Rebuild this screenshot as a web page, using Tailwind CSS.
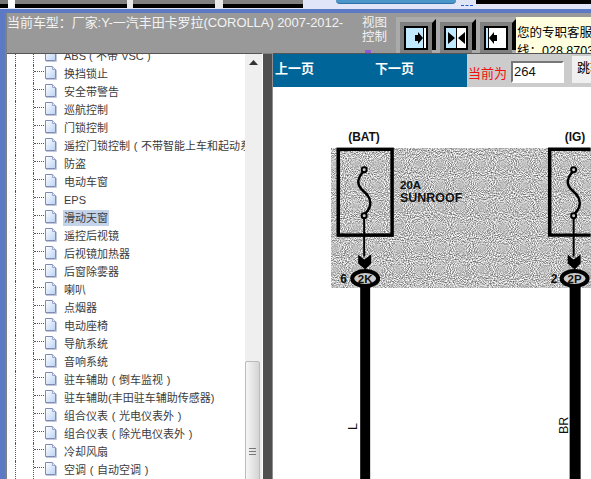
<!DOCTYPE html>
<html lang="zh-CN">
<head>
    <meta charset="UTF-8">
    <title>当前车型</title>
    <script src="https://cdn.jsdelivr.net/npm/@tailwindcss/browser@4"></script>
</head>
<body class="bg-white">
<!-- shared icons -->
<svg width="0" height="0" class="absolute">
    <defs>
        <linearGradient id="paper" x1="0" y1="0" x2="1" y2="1">
            <stop offset="0" stop-color="#ffffff"/>
            <stop offset="1" stop-color="#b9d3f5"/>
        </linearGradient>
        <symbol id="doc" viewBox="0 0 13 14">
            <path d="M1.5 .5H8.5L11.5 3.5V12.5H1.5Z" fill="url(#paper)" stroke="#7f8cb8"/>
            <path d="M8.5 .5V3.5H11.5" fill="#dfe8f8" stroke="#9aa6cc"/>
            <path d="M2 13.5H12.5V4" fill="none" stroke="#c4c8d4"/>
        </symbol>
        <filter id="speckle" x="0" y="0" width="100%" height="100%" color-interpolation-filters="sRGB">
            <feTurbulence type="fractalNoise" baseFrequency="0.95" numOctaves="1" seed="7"/>
            <feColorMatrix values="1 0 0 0 0 1 0 0 0 0 1 0 0 0 0 0 0 0 0 1"/>
            <feComponentTransfer>
                <feFuncR type="linear" slope="1.3" intercept="0.1"/>
                <feFuncG type="linear" slope="1.3" intercept="0.1"/>
                <feFuncB type="linear" slope="1.3" intercept="0.1"/>
            </feComponentTransfer>
        </filter>
    </defs>
</svg>

<div class="w-[591px] h-[479px] overflow-hidden flex flex-col font-['Liberation_Sans','Noto_Sans_CJK_SC',sans-serif]">

    <!-- top strip -->
    <div class="h-[9px] flex shrink-0 bg-[#e0e6f8]">
        <div class="w-[8px] h-[8px] bg-[#777] border-b-[4px] border-black"></div>
        <div class="w-[7px] h-[8px] bg-white"></div>
        <div class="w-[112px] h-[8px] bg-[#808080] border-b-[4px] border-black"></div>
        <div class="w-[6px] h-[8px] bg-[#e8e8e8]"></div>
        <div class="w-[82px] h-[8px] bg-[#808080] border-b-[4px] border-black"></div>
        <div class="w-[8px] h-[8px] bg-[#e8e8e8]"></div>
        <div class="w-[80px] h-[8px] bg-[#808080] border-b-[4px] border-black"></div>
        <div class="w-[33px]"></div>
        <div class="w-[120px] h-[4px] bg-[#4b96c8] border-b border-[#2f6fa8] rounded-b-[4px]"></div>
        <div class="w-[20px] pl-[5px] pt-[5px]"><div class="w-[12px] h-[2px] border-t border-dashed border-[#1c5fd0] border-b-0"></div></div>
        <div class="flex-1 h-[4px] bg-black"></div>
    </div>
    <div class="h-[4px] shrink-0 bg-[#5c7ac4]"></div>

    <!-- header -->
    <div class="h-[40px] shrink-0 flex bg-[#999] border-l-[5px] border-l-[#5c7ac4]">
        <div class="w-[2px] bg-[#808080]"></div>
        <div class="w-[355px] pt-[1px] text-[13px] leading-[18px] tracking-[-0.06px] text-[#f2f2f2] whitespace-nowrap">当前车型：厂家:Y-一汽丰田卡罗拉(COROLLA) 2007-2012-</div>
        <div class="w-[34px] pt-[3px] text-[12.5px] leading-[14px] text-[#f2f2f2] relative">
            <div>视图</div>
            <div>控制</div>
            <div class="absolute left-[3px] bottom-0 w-[6px] h-[3px] bg-[#8a3cf0]/70"></div>
        </div>
        <!-- view buttons -->
        <div class="mt-[4px] w-[120px] flex">
            <div class="w-[44px] pl-[4px] pt-[5px] bg-[#aaa] flex">
                <div class="w-[32px] h-full bg-[#808080] pl-[4px] pt-[4px]">
                    <div class="w-[24px] h-[24px] border-2 border-black bg-[#bfeaff]">
                        <svg width="20" height="20" viewBox="0 0 20 20"><rect x="18" width="2" height="20" fill="#fff"/><rect x="17" width="1" height="20" fill="#000"/><path d="M9 7H12V4L17 10L12 16V13H9Z" fill="#000"/></svg>
                    </div>
                </div>
                <svg class="w-[4px] h-full mt-[-3px]" viewBox="0 0 4 32" preserveAspectRatio="none"><path d="M0 4L4 0V32H0Z" fill="#000"/></svg>
            </div>
            <div class="w-[36px] pt-[5px] bg-[#aaa] flex">
                <div class="w-[32px] h-full bg-[#808080] pl-[4px] pt-[4px]">
                    <div class="w-[24px] h-[24px] border-2 border-black bg-white">
                        <svg width="20" height="20" viewBox="0 0 20 20"><rect width="10" height="20" fill="#bfeaff"/><rect x="10" width="1" height="20" fill="#000"/><path d="M2 4V16L9 10Z M19 4V16L12 10Z" fill="#000"/></svg>
                    </div>
                </div>
                <svg class="w-[4px] h-full mt-[-3px]" viewBox="0 0 4 32" preserveAspectRatio="none"><path d="M0 4L4 0V32H0Z" fill="#000"/></svg>
            </div>
            <div class="w-[40px] pl-[4px] pt-[5px] bg-[#aaa] flex">
                <div class="w-[32px] h-full bg-[#808080] pl-[4px] pt-[4px]">
                    <div class="w-[24px] h-[24px] border-2 border-black bg-white">
                        <svg width="20" height="20" viewBox="0 0 20 20"><rect width="2" height="20" fill="#bfeaff"/><rect x="2" width="1" height="20" fill="#000"/><path d="M3 10L8 4V7H11V13H8V16Z" fill="#000"/></svg>
                    </div>
                </div>
                <svg class="w-[4px] h-full mt-[-3px]" viewBox="0 0 4 32" preserveAspectRatio="none"><path d="M0 4L4 0V32H0Z" fill="#000"/></svg>
            </div>
        </div>
        <!-- service notice -->
        <div class="mt-[4px] flex-1 bg-[#ffffe0] pl-[1px] pt-[7px] text-[12.5px] leading-[18px] text-black whitespace-nowrap overflow-hidden">
            <div>您的专职客服</div>
            <div>线：028 8703</div>
        </div>
    </div>

    <!-- main -->
    <div class="flex-1 flex min-h-0 border-l-[5px] border-l-[#5c7ac4]">
        <div class="w-[2px] bg-[#808080]"></div>

        <!-- tree -->
        <div class="w-[238px] border-t border-[#555] overflow-hidden bg-white">
            <div class="-mt-[7px] text-[11px] text-[#3c3c3c] whitespace-nowrap">
                <div class="h-[18px] flex items-center"><div class="ml-[8px] w-[18px] h-full shrink-0 border-l border-dotted border-[#555]"></div><div class="w-[11px] h-full shrink-0 border-l border-dotted border-[#555] pt-[6px]"><div class="border-t border-dotted border-[#555]"></div></div><svg class="w-[13px] h-[14px] shrink-0 -mt-[3px]"><use href="#doc"/></svg><span class="ml-[6px] px-[1px] shrink-0">ABS <span class="inline-block w-[7px]">(</span>不带 VSC<span class="inline-block w-[7px] text-right">)</span></span></div>
                <div class="h-[18px] flex items-center"><div class="ml-[8px] w-[18px] h-full shrink-0 border-l border-dotted border-[#555]"></div><div class="w-[11px] h-full shrink-0 border-l border-dotted border-[#555] pt-[6px]"><div class="border-t border-dotted border-[#555]"></div></div><svg class="w-[13px] h-[14px] shrink-0 -mt-[3px]"><use href="#doc"/></svg><span class="ml-[6px] px-[1px] shrink-0">换挡锁止</span></div>
                <div class="h-[18px] flex items-center"><div class="ml-[8px] w-[18px] h-full shrink-0 border-l border-dotted border-[#555]"></div><div class="w-[11px] h-full shrink-0 border-l border-dotted border-[#555] pt-[6px]"><div class="border-t border-dotted border-[#555]"></div></div><svg class="w-[13px] h-[14px] shrink-0 -mt-[3px]"><use href="#doc"/></svg><span class="ml-[6px] px-[1px] shrink-0">安全带警告</span></div>
                <div class="h-[18px] flex items-center"><div class="ml-[8px] w-[18px] h-full shrink-0 border-l border-dotted border-[#555]"></div><div class="w-[11px] h-full shrink-0 border-l border-dotted border-[#555] pt-[6px]"><div class="border-t border-dotted border-[#555]"></div></div><svg class="w-[13px] h-[14px] shrink-0 -mt-[3px]"><use href="#doc"/></svg><span class="ml-[6px] px-[1px] shrink-0">巡航控制</span></div>
                <div class="h-[18px] flex items-center"><div class="ml-[8px] w-[18px] h-full shrink-0 border-l border-dotted border-[#555]"></div><div class="w-[11px] h-full shrink-0 border-l border-dotted border-[#555] pt-[6px]"><div class="border-t border-dotted border-[#555]"></div></div><svg class="w-[13px] h-[14px] shrink-0 -mt-[3px]"><use href="#doc"/></svg><span class="ml-[6px] px-[1px] shrink-0">门锁控制</span></div>
                <div class="h-[18px] flex items-center"><div class="ml-[8px] w-[18px] h-full shrink-0 border-l border-dotted border-[#555]"></div><div class="w-[11px] h-full shrink-0 border-l border-dotted border-[#555] pt-[6px]"><div class="border-t border-dotted border-[#555]"></div></div><svg class="w-[13px] h-[14px] shrink-0 -mt-[3px]"><use href="#doc"/></svg><span class="ml-[6px] px-[1px] shrink-0">遥控门锁控制<span class="inline-block w-[11px] text-center">(</span>不带智能上车和起动系统<span class="inline-block w-[11px] text-center">)</span></span></div>
                <div class="h-[18px] flex items-center"><div class="ml-[8px] w-[18px] h-full shrink-0 border-l border-dotted border-[#555]"></div><div class="w-[11px] h-full shrink-0 border-l border-dotted border-[#555] pt-[6px]"><div class="border-t border-dotted border-[#555]"></div></div><svg class="w-[13px] h-[14px] shrink-0 -mt-[3px]"><use href="#doc"/></svg><span class="ml-[6px] px-[1px] shrink-0">防盗</span></div>
                <div class="h-[18px] flex items-center"><div class="ml-[8px] w-[18px] h-full shrink-0 border-l border-dotted border-[#555]"></div><div class="w-[11px] h-full shrink-0 border-l border-dotted border-[#555] pt-[6px]"><div class="border-t border-dotted border-[#555]"></div></div><svg class="w-[13px] h-[14px] shrink-0 -mt-[3px]"><use href="#doc"/></svg><span class="ml-[6px] px-[1px] shrink-0">电动车窗</span></div>
                <div class="h-[18px] flex items-center"><div class="ml-[8px] w-[18px] h-full shrink-0 border-l border-dotted border-[#555]"></div><div class="w-[11px] h-full shrink-0 border-l border-dotted border-[#555] pt-[6px]"><div class="border-t border-dotted border-[#555]"></div></div><svg class="w-[13px] h-[14px] shrink-0 -mt-[3px]"><use href="#doc"/></svg><span class="ml-[6px] px-[1px] shrink-0">EPS</span></div>
                <div class="h-[18px] flex items-center"><div class="ml-[8px] w-[18px] h-full shrink-0 border-l border-dotted border-[#555]"></div><div class="w-[11px] h-full shrink-0 border-l border-dotted border-[#555] pt-[6px]"><div class="border-t border-dotted border-[#555]"></div></div><svg class="w-[13px] h-[14px] shrink-0 -mt-[3px]"><use href="#doc"/></svg><span class="ml-[6px] px-[1px] shrink-0 bg-[#c2d3ea]">滑动天窗</span></div>
                <div class="h-[18px] flex items-center"><div class="ml-[8px] w-[18px] h-full shrink-0 border-l border-dotted border-[#555]"></div><div class="w-[11px] h-full shrink-0 border-l border-dotted border-[#555] pt-[6px]"><div class="border-t border-dotted border-[#555]"></div></div><svg class="w-[13px] h-[14px] shrink-0 -mt-[3px]"><use href="#doc"/></svg><span class="ml-[6px] px-[1px] shrink-0">遥控后视镜</span></div>
                <div class="h-[18px] flex items-center"><div class="ml-[8px] w-[18px] h-full shrink-0 border-l border-dotted border-[#555]"></div><div class="w-[11px] h-full shrink-0 border-l border-dotted border-[#555] pt-[6px]"><div class="border-t border-dotted border-[#555]"></div></div><svg class="w-[13px] h-[14px] shrink-0 -mt-[3px]"><use href="#doc"/></svg><span class="ml-[6px] px-[1px] shrink-0">后视镜加热器</span></div>
                <div class="h-[18px] flex items-center"><div class="ml-[8px] w-[18px] h-full shrink-0 border-l border-dotted border-[#555]"></div><div class="w-[11px] h-full shrink-0 border-l border-dotted border-[#555] pt-[6px]"><div class="border-t border-dotted border-[#555]"></div></div><svg class="w-[13px] h-[14px] shrink-0 -mt-[3px]"><use href="#doc"/></svg><span class="ml-[6px] px-[1px] shrink-0">后窗除雾器</span></div>
                <div class="h-[18px] flex items-center"><div class="ml-[8px] w-[18px] h-full shrink-0 border-l border-dotted border-[#555]"></div><div class="w-[11px] h-full shrink-0 border-l border-dotted border-[#555] pt-[6px]"><div class="border-t border-dotted border-[#555]"></div></div><svg class="w-[13px] h-[14px] shrink-0 -mt-[3px]"><use href="#doc"/></svg><span class="ml-[6px] px-[1px] shrink-0">喇叭</span></div>
                <div class="h-[18px] flex items-center"><div class="ml-[8px] w-[18px] h-full shrink-0 border-l border-dotted border-[#555]"></div><div class="w-[11px] h-full shrink-0 border-l border-dotted border-[#555] pt-[6px]"><div class="border-t border-dotted border-[#555]"></div></div><svg class="w-[13px] h-[14px] shrink-0 -mt-[3px]"><use href="#doc"/></svg><span class="ml-[6px] px-[1px] shrink-0">点烟器</span></div>
                <div class="h-[18px] flex items-center"><div class="ml-[8px] w-[18px] h-full shrink-0 border-l border-dotted border-[#555]"></div><div class="w-[11px] h-full shrink-0 border-l border-dotted border-[#555] pt-[6px]"><div class="border-t border-dotted border-[#555]"></div></div><svg class="w-[13px] h-[14px] shrink-0 -mt-[3px]"><use href="#doc"/></svg><span class="ml-[6px] px-[1px] shrink-0">电动座椅</span></div>
                <div class="h-[18px] flex items-center"><div class="ml-[8px] w-[18px] h-full shrink-0 border-l border-dotted border-[#555]"></div><div class="w-[11px] h-full shrink-0 border-l border-dotted border-[#555] pt-[6px]"><div class="border-t border-dotted border-[#555]"></div></div><svg class="w-[13px] h-[14px] shrink-0 -mt-[3px]"><use href="#doc"/></svg><span class="ml-[6px] px-[1px] shrink-0">导航系统</span></div>
                <div class="h-[18px] flex items-center"><div class="ml-[8px] w-[18px] h-full shrink-0 border-l border-dotted border-[#555]"></div><div class="w-[11px] h-full shrink-0 border-l border-dotted border-[#555] pt-[6px]"><div class="border-t border-dotted border-[#555]"></div></div><svg class="w-[13px] h-[14px] shrink-0 -mt-[3px]"><use href="#doc"/></svg><span class="ml-[6px] px-[1px] shrink-0">音响系统</span></div>
                <div class="h-[18px] flex items-center"><div class="ml-[8px] w-[18px] h-full shrink-0 border-l border-dotted border-[#555]"></div><div class="w-[11px] h-full shrink-0 border-l border-dotted border-[#555] pt-[6px]"><div class="border-t border-dotted border-[#555]"></div></div><svg class="w-[13px] h-[14px] shrink-0 -mt-[3px]"><use href="#doc"/></svg><span class="ml-[6px] px-[1px] shrink-0">驻车辅助<span class="inline-block w-[11px] text-center">(</span>倒车监视<span class="inline-block w-[11px] text-center">)</span></span></div>
                <div class="h-[18px] flex items-center"><div class="ml-[8px] w-[18px] h-full shrink-0 border-l border-dotted border-[#555]"></div><div class="w-[11px] h-full shrink-0 border-l border-dotted border-[#555] pt-[6px]"><div class="border-t border-dotted border-[#555]"></div></div><svg class="w-[13px] h-[14px] shrink-0 -mt-[3px]"><use href="#doc"/></svg><span class="ml-[6px] px-[1px] shrink-0">驻车辅助(丰田驻车辅助传感器)</span></div>
                <div class="h-[18px] flex items-center"><div class="ml-[8px] w-[18px] h-full shrink-0 border-l border-dotted border-[#555]"></div><div class="w-[11px] h-full shrink-0 border-l border-dotted border-[#555] pt-[6px]"><div class="border-t border-dotted border-[#555]"></div></div><svg class="w-[13px] h-[14px] shrink-0 -mt-[3px]"><use href="#doc"/></svg><span class="ml-[6px] px-[1px] shrink-0">组合仪表<span class="inline-block w-[11px] text-center">(</span>光电仪表外<span class="inline-block w-[11px] text-center">)</span></span></div>
                <div class="h-[18px] flex items-center"><div class="ml-[8px] w-[18px] h-full shrink-0 border-l border-dotted border-[#555]"></div><div class="w-[11px] h-full shrink-0 border-l border-dotted border-[#555] pt-[6px]"><div class="border-t border-dotted border-[#555]"></div></div><svg class="w-[13px] h-[14px] shrink-0 -mt-[3px]"><use href="#doc"/></svg><span class="ml-[6px] px-[1px] shrink-0">组合仪表<span class="inline-block w-[11px] text-center">(</span>除光电仪表外<span class="inline-block w-[11px] text-center">)</span></span></div>
                <div class="h-[18px] flex items-center"><div class="ml-[8px] w-[18px] h-full shrink-0 border-l border-dotted border-[#555]"></div><div class="w-[11px] h-full shrink-0 border-l border-dotted border-[#555] pt-[6px]"><div class="border-t border-dotted border-[#555]"></div></div><svg class="w-[13px] h-[14px] shrink-0 -mt-[3px]"><use href="#doc"/></svg><span class="ml-[6px] px-[1px] shrink-0">冷却风扇</span></div>
                <div class="h-[18px] flex items-center"><div class="ml-[8px] w-[18px] h-full shrink-0 border-l border-dotted border-[#555]"></div><div class="w-[11px] h-full shrink-0 border-l border-dotted border-[#555] pt-[6px]"><div class="border-t border-dotted border-[#555]"></div></div><svg class="w-[13px] h-[14px] shrink-0 -mt-[3px]"><use href="#doc"/></svg><span class="ml-[6px] px-[1px] shrink-0">空调<span class="inline-block w-[11px] text-center">(</span>自动空调<span class="inline-block w-[11px] text-center">)</span></span></div>
            </div>
        </div>

        <!-- scrollbar -->
        <div class="w-[18px] bg-[#efefef] border-t border-[#555] border-r border-r-white pt-[6px] relative">
            <svg class="ml-[4px]" width="9" height="5" viewBox="0 0 9 5"><path d="M4.5 0L9 5H0Z" fill="#333"/></svg>
            <div class="absolute left-0 top-[307px] w-[15px] h-[130px] rounded-t-[2px] border border-[#bbb] bg-[linear-gradient(90deg,#f6f6f6,#d4d4d4)] flex justify-center pt-[86px]">
                <div class="w-[7px] h-[7px] border-y border-[#777]"><div class="mt-[2px] border-t border-[#777]"></div></div>
            </div>
        </div>

        <!-- splitter -->
        <div class="w-[9px] bg-[#505050] border-t border-[#808080]"></div>
        <div class="w-[1px] bg-[#909090]"></div>

        <!-- page viewer -->
        <div class="flex-1 min-w-0 flex flex-col bg-white border-t border-[#555]">
            <div class="h-[33px] shrink-0 flex bg-[#006699]">
                <div class="w-[194px] shrink-0 flex pl-[2px] pt-[6px] text-[13px] leading-[18px] text-white font-bold">
                    <span class="w-[100px]">上一页</span>
                    <span>下一页</span>
                </div>
                <div class="w-[124px] shrink-0 bg-[#ccc] flex overflow-hidden">
                    <span class="ml-[1px] mt-[11px] text-[13px] leading-[18px] text-[#f01010] whitespace-nowrap shrink-0">当前为</span>
                    <div class="ml-[4px] mt-[7px] w-[53px] h-[22px] shrink-0 border-2 border-t-[#777] border-l-[#777] border-r-white border-b-white bg-white pl-[1px] text-[13px] leading-[18px] text-[#111]">264</div>
                    <div class="ml-[8px] mt-[2px] w-[40px] h-[27px] shrink-0 bg-[#f0f0f0] pl-[5px] pt-[3px] text-[13px] leading-[18px] text-black whitespace-nowrap">跳转</div>
                </div>
            </div>

            <!-- wiring diagram scan -->
            <svg class="block" width="318" height="393" viewBox="273 86 318 393" font-family="Liberation Sans" fill="#111">
                <rect x="331" y="148" width="260" height="139" fill="#bbb"/>
                <rect x="331" y="148" width="260" height="139" filter="url(#speckle)"/>
                <text x="348" y="140" font-size="12" font-weight="bold">(BAT)</text>
                <text x="565" y="140" font-size="12" font-weight="bold">(IG)</text>
                <rect x="338" y="148.5" width="54" height="86" fill="none" stroke="#000" stroke-width="3.5"/>
                <path d="M591 148.5H550V234.5H591" fill="none" stroke="#000" stroke-width="3.5"/>
                <text x="400" y="188" font-size="11.5" font-weight="bold">20A</text>
                <text x="400" y="201" font-size="12.5" font-weight="bold">SUNROOF</text>

                <circle cx="364" cy="169" r="2.5" fill="#ccc" stroke="#000" stroke-width="2"/>
                <path d="M363 171C355 180 358 186 364 191C372 198 372 206 365 213" fill="none" stroke="#000" stroke-width="2.5"/>
                <circle cx="364" cy="215" r="2.5" fill="#ccc" stroke="#000" stroke-width="2"/>
                <path d="M364 218V256" stroke="#000" stroke-width="2"/>
                <path d="M358 254L364 259L371 254V263L365 269L358 263Z" fill="#000"/>
                <text x="340" y="283" font-size="12" font-weight="bold">6</text>
                <ellipse cx="365" cy="278" rx="13" ry="7.5" fill="#ccc" stroke="#000" stroke-width="4"/>
                <text x="365" y="282" font-size="11.5" font-weight="bold" text-anchor="middle">2K</text>
                <rect x="360" y="286" width="10" height="193" fill="#000"/>
                <text transform="translate(357 430) rotate(-90)" font-size="12.5">L</text>

                <circle cx="574" cy="169" r="2.5" fill="#ccc" stroke="#000" stroke-width="2"/>
                <path d="M573 171C565 180 568 186 574 191C582 198 582 206 575 213" fill="none" stroke="#000" stroke-width="2.5"/>
                <circle cx="574" cy="215" r="2.5" fill="#ccc" stroke="#000" stroke-width="2"/>
                <path d="M574 218V256" stroke="#000" stroke-width="2"/>
                <path d="M568 254L574 259L581 254V263L575 269L568 263Z" fill="#000"/>
                <text x="551" y="283" font-size="12" font-weight="bold">2</text>
                <ellipse cx="575" cy="278" rx="13" ry="7.5" fill="#ccc" stroke="#000" stroke-width="4"/>
                <text x="575" y="282" font-size="11.5" font-weight="bold" text-anchor="middle">2P</text>
                <rect x="570" y="286" width="11" height="193" fill="#000"/>
                <text transform="translate(568 434) rotate(-90)" font-size="12.5">BR</text>
            </svg>
        </div>
    </div>
</div>
</body>
</html>
